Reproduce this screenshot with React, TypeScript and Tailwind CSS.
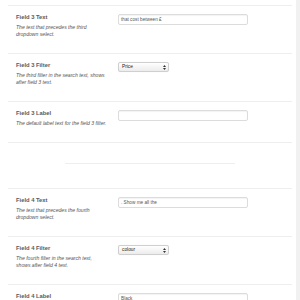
type Field = {
  label: string;
  desc: string[];
  kind: "text" | "select";
  value: string;
};

const before: Field[] = [
  { label: "Field 3 Text", desc: ["The text that precedes the third", "dropdown select."], kind: "text", value: "that cost between £" },
  { label: "Field 3 Filter", desc: ["The third filter in the search text, shows", "after field 3 text."], kind: "select", value: "Price" },
  { label: "Field 3 Label", desc: ["The default label text for the field 3 filter."], kind: "text", value: "" },
];

const after: Field[] = [
  { label: "Field 4 Text", desc: ["The text that precedes the fourth", "dropdown select."], kind: "text", value: ". Show me all the" },
  { label: "Field 4 Filter", desc: ["The fourth filter in the search text,", "shows after field 4 text."], kind: "select", value: "colour" },
  { label: "Field 4 Label", desc: ["The default label text for the field 4 filter."], kind: "text", value: "Black" },
];

function Control({ field }: { field: Field }) {
  if (field.kind === "select") {
    return (
      <div className="flex h-[10px] w-[51px] items-center justify-between rounded-[2px] border border-[#cfcfcf] bg-gradient-to-b from-white to-[#ececec] pl-[3px] pr-[2px] text-[4.8px] text-[#222] shadow-[0_0_1px_rgba(0,0,0,0.1)]">
            <span>{field.value}</span>
            <svg width="3" height="5" viewBox="0 0 3 5">
                <path d="M0 2 L1.5 0 L3 2 Z M0 3 L1.5 5 L3 3 Z" fill="#333" />
            </svg>
        </div>
    );
  }
  return (
    <div className="flex h-[11px] w-[130px] items-center rounded-[2px] border border-[#dcdcdc] bg-white pl-[2px] text-[4.7px] text-[#555] shadow-[inset_0_1px_1px_rgba(0,0,0,0.05)]">
        {field.value}
    </div>
  );
}

function Row({ field }: { field: Field }) {
  return (
    <div className="flex border-t border-[#eeeeee] pb-[15px]">
        <div className="w-[110px] pl-[8px] pt-[7px]">
            <div className="h-[8px] text-[5.8px] font-bold leading-[8px] text-[#5a5a5a]">{field.label}</div>
            <div className="mt-[3px] text-[5.1px] italic leading-[7px] text-[#555]">
                {field.desc.map((d) => (
                    <div key={d} className="whitespace-nowrap">{d}</div>
                ))}
            </div>
        </div>
        <div className="pt-[8px]">
            <Control field={field} />
        </div>
    </div>
  );
}

export default function App() {
  return (
    <div className="flex h-[300px] w-[300px] overflow-hidden bg-white font-['Liberation_Sans',Arial,sans-serif]">
        <div className="flex-1 pl-[8px] pr-[4px] pt-[5px]">
            {before.map((f) => (
                <Row key={f.label} field={f} />
            ))}
            <div className="border-t border-[#eeeeee] pb-[24px] pt-[20px]">
                <div className="mx-auto h-px w-[170px] bg-[#eeeeee]" />
            </div>
            {after.map((f) => (
                <Row key={f.label} field={f} />
            ))}
        </div>
        <div className="w-[4px] bg-[#f1f1f1]" />
    </div>
  );
}
